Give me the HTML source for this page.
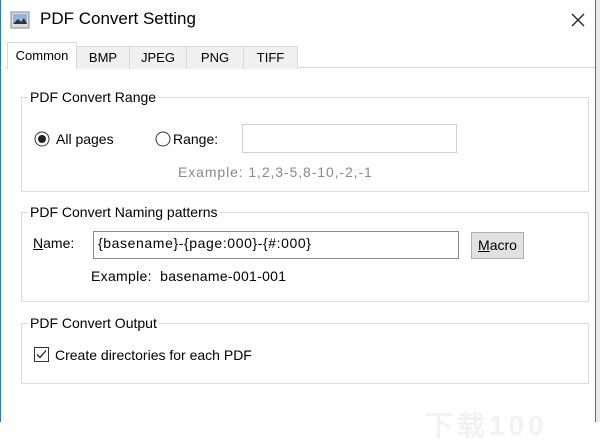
<!DOCTYPE html>
<html><head><style>
body{margin:0;width:600px;height:422px;overflow:hidden;background:#fff;font-family:"Liberation Sans",sans-serif;font-size:13px;color:#000;position:relative}
.a{position:absolute}
.g{position:absolute;border:1px solid #dcdcdc}
.lbl{position:absolute;background:#fff;padding:0 2px;font-size:14px}
.tab{position:absolute;top:46px;height:22px;background:#f0f0f0;border:1px solid #d9d9d9;border-bottom:none;text-align:center;line-height:22px;font-size:13px}
.in{position:absolute;border:1px solid #b8b8b8;background:#fff}
</style></head><body>
<div class="a" style="left:0;top:0;width:1px;height:422px;background:#2b79c2"></div>
<div class="a" style="left:595px;top:0;width:1px;height:422px;background:#2b79c2"></div>
<div class="a" style="left:596px;top:0;width:4px;height:422px;background:#eaeaea"></div>
<svg class="a" style="left:10px;top:11px" width="20" height="18"><rect x="1" y="1" width="18" height="16" fill="#ddd" stroke="#888"/><rect x="3" y="3" width="14" height="10" fill="#8fb6dc"/><path d="M3 13 L8 8 L11 11 L14 7 L17 13Z" fill="#333"/></svg>
<div class="a" style="left:40px;top:9px;font-size:17px">PDF Convert Setting</div>
<svg class="a" style="left:571px;top:13px" width="14" height="14"><path d="M1 1L13 13M13 1L1 13" stroke="#222" stroke-width="1.3"/></svg>
<div class="a" style="left:5px;top:67px;width:590px;height:1px;background:#d9d9d9"></div>
<div class="tab" style="left:76px;width:52px">BMP</div>
<div class="tab" style="left:129px;width:56px">JPEG</div>
<div class="tab" style="left:186px;width:56px">PNG</div>
<div class="tab" style="left:243px;width:53px">TIFF</div>
<div class="tab" style="left:7px;top:42px;height:26px;width:68px;background:#fff;line-height:26px;border-color:#d9d9d9">Common</div>

<div class="g" style="left:21px;top:97px;width:566px;height:93px"></div>
<div class="lbl" style="left:28px;top:89px">PDF Convert Range</div>
<svg class="a" style="left:34px;top:131px" width="16" height="16"><circle cx="8" cy="8" r="7" fill="#fff" stroke="#333"/><circle cx="8" cy="8" r="4" fill="#222"/></svg>
<div class="a" style="left:56px;top:131px;font-size:14px">All pages</div>
<svg class="a" style="left:155px;top:131px" width="16" height="16"><circle cx="8" cy="8" r="7" fill="#fff" stroke="#333"/></svg>
<div class="a" style="left:173px;top:131px;font-size:14px">Range:</div>
<div class="in" style="left:242px;top:124px;width:213px;height:27px;border-color:#cfcfcf"></div>
<div class="a" style="left:178px;top:164px;color:#8a8a8a;font-size:14px;letter-spacing:0.9px">Example: 1,2,3-5,8-10,-2,-1</div>

<div class="g" style="left:21px;top:212px;width:566px;height:88px"></div>
<div class="lbl" style="left:28px;top:204px">PDF Convert Naming patterns</div>
<div class="a" style="left:33px;top:235px;font-size:14px"><u>N</u>ame:</div>
<div class="in" style="left:93px;top:231px;width:364px;height:26px;border-color:#8a8a8a"></div>
<div class="a" style="left:98px;top:235px;font-size:14px;letter-spacing:0.6px">{basename}-{page:000}-{#:000}</div>
<div class="a" style="left:471px;top:232px;width:51px;height:25px;background:#e1e1e1;border:1px solid #adadad;text-align:center;line-height:25px;font-size:14px"><u>M</u>acro</div>
<div class="a" style="left:91px;top:268px;font-size:14px;letter-spacing:0.3px">Example:&nbsp; basename-001-001</div>

<div class="g" style="left:21px;top:323px;width:566px;height:59px"></div>
<div class="lbl" style="left:28px;top:315px">PDF Convert Output</div>
<svg class="a" style="left:34px;top:347px" width="16" height="16"><rect x="0.5" y="0.5" width="14" height="14" fill="#fff" stroke="#333"/><path d="M3 7.5L6 10.5L12 3.5" stroke="#222" stroke-width="1.3" fill="none"/></svg>
<div class="a" style="left:55px;top:347px;font-size:14px">Create directories for each PDF</div>
<div class="a" style="left:425px;top:404px;font-size:28px;font-weight:bold;color:#f2f2f2;letter-spacing:4px">下载100</div>
</body></html>
